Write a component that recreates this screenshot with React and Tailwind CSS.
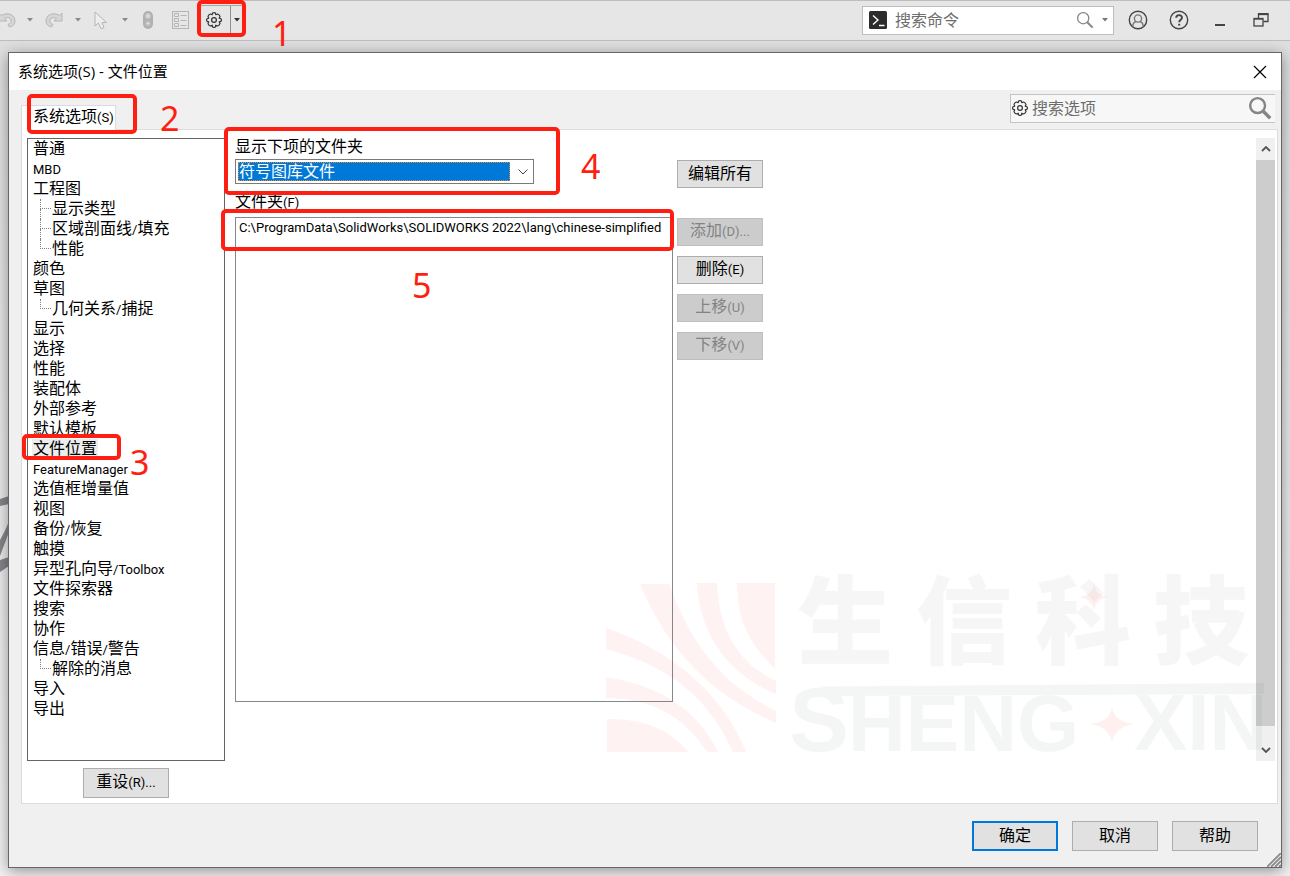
import { useState } from "react";

const treeItems = [
  { name: "普通" },
  { name: "MBD" },
  { name: "工程图" },
  { name: "显示类型", child: true },
  { name: "区域剖面线/填充", child: true },
  { name: "性能", child: true, last: true },
  { name: "颜色" },
  { name: "草图" },
  { name: "几何关系/捕捉", child: true, last: true },
  { name: "显示" },
  { name: "选择" },
  { name: "性能" },
  { name: "装配体" },
  { name: "外部参考" },
  { name: "默认模板" },
  { name: "文件位置", id: "locations" },
  { name: "FeatureManager" },
  { name: "选值框增量值" },
  { name: "视图" },
  { name: "备份/恢复" },
  { name: "触摸" },
  { name: "异型孔向导/Toolbox" },
  { name: "文件探索器" },
  { name: "搜索" },
  { name: "协作" },
  { name: "信息/错误/警告" },
  { name: "解除的消息", child: true, last: true },
  { name: "导入" },
  { name: "导出" },
];

// Latin runs are set smaller than the Chinese around them
function Mixed({ text }) {
  return text.split(/([\x20-\x7e]+)/).map((part, index) => (
    <span key={index} className={index % 2 ? "font-['Roboto',sans-serif] text-[13px]" : ""}>
      {part}
    </span>
  ));
}

function DialogButton({ text, disabled = false, primary = false, className = "h-7" }) {
  const tone = disabled ? "border border-[#bfbfbf] bg-[#cccccc] text-[#838383]" : primary ? "border-2 border-[#0078d7] bg-[#e1e1e1]" : "border border-[#adadad] bg-[#e1e1e1]";
  return (
    <button type="button" disabled={disabled} className={`flex w-[86px] shrink-0 items-center justify-center whitespace-nowrap pb-[2px] leading-5 ${tone} ${className}`}>
      <span className="whitespace-nowrap">
        <Mixed text={text} />
      </span>
    </button>
  );
}

function Gear({ className = "" }) {
  return (
    <svg viewBox="0 0 16 16" className={`size-4 shrink-0 ${className}`} fill="none" stroke="currentColor" strokeWidth="1.2" strokeLinejoin="round">
      <path d="M6.6 1 Q8 .2 9.4 1 L9.8 2.7 L11.5 2 Q13.4 2.5 14 4.4 L13.2 6.2 L15 6.8 Q15.8 8 15 9.3 L13.2 9.8 L14 11.6 Q13.4 13.5 11.5 14 L9.8 13.2 L9.4 15 Q8 15.8 6.6 15 L6.2 13.2 L4.4 14 Q2.5 13.5 2 11.6 L2.7 9.8 L1 9.3 Q.2 8 1 6.8 L2.7 6.2 L2 4.4 Q2.5 2.5 4.4 2 L6.2 2.7 Z" />
      <circle cx="8" cy="8" r="2.4" />
    </svg>
  );
}

function Caret({ className = "text-[#8a8a8a]" }) {
  return (
    <svg viewBox="0 0 6 4" className={`h-[4px] w-[6px] shrink-0 ${className}`} fill="currentColor">
      <path d="M0 0H6L3 3.6Z" />
    </svg>
  );
}

function Magnifier({ className = "", width = 2 }) {
  return (
    <svg viewBox="0 0 20 20" className={`shrink-0 ${className}`} fill="none" stroke="currentColor" strokeWidth={width}>
      <circle cx="8" cy="8" r="6.2" />
      <path d="M12.5 12.5L18.5 18.5" strokeWidth={width + 0.8} />
    </svg>
  );
}

function TopBar() {
  return (
    <header className="flex h-[41px] shrink-0 items-center justify-between border-y border-[#bdbdbd] bg-[#e6e6e6] pb-px">
      <div className="flex h-full items-center text-[#b5b5b5]">
        <button type="button" aria-label="撤销" className="flex w-[27px] items-center">
          <svg viewBox="0 0 16 16" className="h-4 w-4" fill="#d6d6d6" stroke="currentColor">
            <path d="M-1 1L1.500 3.500C8 -.5 15 3 15 9C15 12 13 14.300 9.500 15L8 12.500C10.500 11.500 11.500 10 11 8C10.300 5.500 7 5 4.500 6.500L7 9H-1Z" />
          </svg>
        </button>
        <Caret />
        <button type="button" aria-label="重做" className="ml-[12px] flex w-[30px] items-center">
          <svg viewBox="0 0 18 16" className="h-4 w-[18px]" fill="#d6d6d6" stroke="currentColor">
            <path d="M17 1L14.500 3.500C8 -.5 1 3 1 9C1 12 3 14.300 6.500 15L8 12.500C5.500 11.500 4.500 10 5 8C5.700 5.500 9 5 11.500 6.500L9 9H17Z" />
          </svg>
        </button>
        <Caret />
        <button type="button" aria-label="选择" className="ml-[13px] flex w-[28px] items-center">
          <svg viewBox="0 0 14 19" className="h-[19px] w-[14px]" fill="#eeeeee" stroke="currentColor">
            <path d="M1 1V15L4.500 12L7 17.800L10 16.600L8 11.500L12.500 11.500Z" />
          </svg>
        </button>
        <Caret />
        <button type="button" aria-label="重建模型" className="ml-[14px] flex w-[30px] items-center">
          <svg viewBox="0 0 12 18" className="h-[18px] w-3">
            <rect x="1" y="0" width="10" height="18" rx="5" fill="#b0b0b0" />
            <circle cx="6" cy="5" r="3" fill="#c6c6c6" />
            <circle cx="6" cy="12.500" r="3" fill="#bdbdbd" />
            <path d="M6 3V7M4 5H8M6 11V14M4.500 12.500H7.500" stroke="#e0e0e0" />
          </svg>
        </button>
        <button type="button" aria-label="文件属性" className="flex w-[26px] items-center">
          <svg viewBox="0 0 17 18" className="h-[18px] w-[17px]" fill="none" stroke="currentColor">
            <rect x=".5" y=".5" width="16" height="17" />
            <path d="M2.500 2.500H6.500V5.500H2.500ZM2.500 7.500H6.500V10.500H2.500ZM2.500 12.500H6.500V15.500H2.500ZM8.500 4.500H14.500M8.500 9.500H14.500M8.500 14.500H14.500" />
          </svg>
        </button>
        <div className="flex h-[30px] items-center border border-[#a8a8a8] text-[#333333]">
          <button type="button" aria-label="选项" className="flex h-full w-[32px] items-center justify-center border-r border-[#8f8f8f] pr-px">
            <Gear />
          </button>
          <button type="button" aria-label="选项菜单" className="flex h-full w-3 items-center justify-center">
            <Caret className="text-[#333333]" />
          </button>
        </div>
      </div>
      <div className="flex items-center pr-[9px] text-[#444444]">
        <label className="mr-[3px] flex h-[29px] w-[252px] items-center border border-[#bdbdbd] bg-white pl-[6px] pr-[5px]">
          <svg viewBox="0 0 18 18" className="size-[18px] shrink-0" fill="none">
            <rect width="18" height="18" rx="1.500" fill="#2c2c2c" />
            <path d="M4 4.500L9 9L4 13.500M10 14.500H15.500" stroke="white" strokeWidth="1.400" />
          </svg>
          <input type="text" aria-label="搜索命令" placeholder="搜索命令" className="ml-2 w-0 flex-1 bg-transparent leading-5 outline-none placeholder:text-[#6d6d6d]" />
          <Magnifier className="size-[18px] text-[#858585]" width={1.4} />
          <Caret className="ml-[8px] text-[#777777]" />
        </label>
        <button type="button" aria-label="登录" className="flex w-[41px] justify-center">
          <svg viewBox="0 0 20 20" className="size-5" fill="none" stroke="currentColor" strokeWidth="1.400">
            <circle cx="10" cy="10" r="8.700" />
            <circle cx="10" cy="8.500" r="3.600" stroke="#777777" />
            <path d="M4.800 16.200C5 13.300 6.500 12 8 11.800M15.200 16.200C15 13.300 13.500 12 12 11.800" stroke="#777777" />
          </svg>
        </button>
        <button type="button" aria-label="帮助" className="flex w-[41px] justify-center">
          <svg viewBox="0 0 20 20" className="size-5" fill="none" stroke="currentColor" strokeWidth="1.400">
            <circle cx="10" cy="10" r="8.700" />
            <path d="M7.200 7.800C7.200 4.200 13 4.300 13 7.600C13 9.700 10.200 9.800 10.200 12.300" strokeWidth="1.900" />
            <path d="M9.200 13.800H11.200V15.600H9.200Z" fill="currentColor" stroke="none" />
          </svg>
        </button>
        <button type="button" aria-label="最小化" className="flex w-[41px] justify-center">
          <svg viewBox="0 0 16 16" className="size-4" stroke="currentColor" strokeWidth="2">
            <path d="M3 13H13" />
          </svg>
        </button>
        <button type="button" aria-label="还原" className="flex w-[41px] justify-center">
          <svg viewBox="0 0 16 16" className="size-4" fill="none" stroke="currentColor" strokeWidth="1.300">
            <path d="M5.500 6V1.700H15V9.500H10.500" />
            <path d="M5 2.500H15.500" />
            <rect x="1" y="6.500" width="9" height="7.500" />
            <path d="M1 7H10" />
          </svg>
        </button>
      </div>
    </header>
  );
}

function OptionTree({ selected, onSelect }) {
  return (
    <ul className="w-[198px] shrink-0 border border-[#646464] bg-white pl-1">
      {treeItems.map((item, index) => (
        <li key={index} className="flex h-5 items-center">
          {item.child && (
            <span className="ml-2 flex h-5 w-[11px] flex-col">
              <span className="h-[10px] border-b border-l border-dotted border-[#808080]" />
              <span className={item.last ? "h-[10px]" : "h-[10px] border-l border-dotted border-[#808080]"} />
            </span>
          )}
          <button type="button" onClick={() => onSelect(index)} className={`h-5 whitespace-nowrap px-px pb-[2px] leading-[18px] ${selected === index ? "bg-[#ededed]" : ""}`}>
            <Mixed text={item.name} />
          </button>
        </li>
      ))}
    </ul>
  );
}

function ScrollBar() {
  return (
    <div className="flex w-[19px] shrink-0 flex-col items-center bg-[#f0f0f0] text-[#555555]">
      <svg viewBox="0 0 10 6" className="my-[8px] h-[6px] w-[10px] shrink-0" fill="none" stroke="currentColor" strokeWidth="1.800">
        <path d="M1 5L5 1L9 5" />
      </svg>
      <div className="w-full flex-1 bg-[#cdcdcd]" />
      <svg viewBox="0 0 10 6" className="mb-[8px] mt-[21px] h-[6px] w-[10px] shrink-0" fill="none" stroke="currentColor" strokeWidth="1.800">
        <path d="M1 1L5 5L9 1" />
      </svg>
    </div>
  );
}

function Watermark() {
  return (
    <svg viewBox="0 0 660 200" className="pointer-events-none absolute bottom-[102px] right-[15px] h-[200px] w-[660px] overflow-visible">
      <g fill="#f04030" opacity=".06" transform="translate(0 14)">
        <path d="M34 5H63C84 62 112 103 170 132V144C96 112 58 62 34 5Z" />
        <path d="M91 4H111C113 52 132 84 170 102V115C120 95 93 52 91 4Z" />
        <path d="M131 4H169V90C143 65 131 40 131 4Z" />
        <path d="M0 49C67 72 117 115 140 173H127C103 118 61 86 0 70Z" />
        <path d="M0 98C51 106 90 128 112 173H101C76 135 45 120 0 119Z" />
        <path d="M1 140C38 140 64 150 82 173H1Z" />
      </g>
      <g fill="black" opacity=".03" className="font-['Noto_Sans_CJK_SC',sans-serif] text-[96px] font-black">
        <text x="191" y="91">生</text>
        <text x="310" y="91">信</text>
        <text x="429" y="91">科</text>
        <text x="547" y="91">技</text>
      </g>
      <g fill="#104030" opacity=".04" className="font-['Liberation_Sans',sans-serif] font-bold">
        <path d="M214 121.500L658 118V129L226 131Z" />
        <text x="183" y="186" className="text-[90px]">S</text>
        <text x="242" y="186" className="text-[80px]">HENG</text>
        <text x="528" y="185" className="text-[80px]">XIN</text>
      </g>
      <g fill="#f04030" opacity=".07" transform="translate(0 14)">
        <path d="M488 5Q490 17 501 18Q490 20 488 31Q486 20 473 18Q486 17 488 5Z" />
        <path d="M506 129Q509 143 528 145Q509 148 506 163Q503 148 485 145Q503 143 506 129Z" />
      </g>
    </svg>
  );
}

// red numbered marks that lie over the window
function Marks() {
  return (
    <div className="pointer-events-none absolute left-0 top-0 font-['Noto_Sans',sans-serif] text-[34px] leading-10 text-[#ff1f12]">
      <span className="absolute left-[197px] top-0 h-[37px] w-[49px] rounded-[5px] border-4 border-[#ff1f12]" />
      <span className="absolute left-[27px] top-[94px] h-[40px] w-[110px] rounded-[5px] border-4 border-[#ff1f12]" />
      <span className="absolute left-[22px] top-[434px] h-[26px] w-[99px] rounded-[5px] border-4 border-[#ff1f12]" />
      <span className="absolute left-[224px] top-[127px] h-[68px] w-[336px] rounded-[5px] border-4 border-[#ff1f12]" />
      <span className="absolute left-[221px] top-[209px] h-[42px] w-[453px] rounded-[5px] border-4 border-[#ff1f12]" />
      <span className="absolute left-[272px] top-[13px]">1</span>
      <span className="absolute left-[160px] top-[98px]">2</span>
      <span className="absolute left-[130px] top-[442px]">3</span>
      <span className="absolute left-[581px] top-[146px]">4</span>
      <span className="absolute left-[412px] top-[265px]">5</span>
    </div>
  );
}

export default function App() {
  const [selected, setSelected] = useState(treeItems.findIndex((item) => item.id === "locations"));

  return (
    <div className="relative flex min-h-screen flex-col overflow-hidden bg-linear-to-b from-[#dedede] to-[#f2f2f2] font-['Open_Sans','Noto_Sans_CJK_SC',sans-serif] text-base text-black">
      <TopBar />
      <svg viewBox="0 0 9 84" className="absolute left-0 top-[494px] h-[84px] w-[9px]" fill="#85858a">
        <path d="M0 5L9 2V10L0 12ZM9 26C7 34 3 40 0 46V62L9 38ZM0 66L9 63V72L0 78Z" />
      </svg>

      <main className="relative mx-2 mb-2 mt-[11px] flex flex-1 flex-col border border-[#666666] bg-[#f0f0f0] shadow-[0_3px_14px_rgba(0,0,0,.4)]">
        <div className="flex h-[37px] shrink-0 items-center justify-between bg-white pl-[9px] pr-[14px]">
          <h1 className="pb-[2px] text-[15px] leading-5">系统选项(S) - 文件位置</h1>
          <button type="button" aria-label="关闭">
            <svg viewBox="0 0 14 14" className="size-[14px]" stroke="black" strokeWidth="1.200">
              <path d="M1 1L13 13M13 1L1 13" />
            </svg>
          </button>
        </div>

        <div className="ml-3 mr-[3px] flex h-[39px] shrink-0 justify-between">
          <button type="button" className="relative -mb-px mt-[15px] w-[95px] self-stretch border border-b-0 border-[#dcdcdc] bg-white pb-[3px] pl-[11px] text-left leading-5">
            <Mixed text="系统选项(S)" />
          </button>
          <label className="mr-[3px] mt-1 flex h-[29px] w-[265px] items-center border border-r-0 border-[#c4c4c4] bg-[#f7f7f7] pb-px pl-px pr-[3px]">
            <Gear className="text-[#333333]" />
            <input type="text" aria-label="搜索选项" placeholder="搜索选项" className="ml-1 w-0 flex-1 bg-transparent leading-5 outline-none placeholder:text-[#6d6d6d]" />
            <Magnifier className="size-6 text-[#858585]" width={2} />
          </label>
        </div>

        <section className="ml-3 mr-[3px] flex flex-1 flex-col border border-[#dcdcdc] bg-white pb-[5px] pl-[5px] pr-[2px] pt-2">
          <div className="flex flex-1">
            <OptionTree selected={selected} onSelect={setSelected} />
            <div className="ml-[10px] flex w-[438px] flex-col">
              <label htmlFor="folder-kind" className="h-[21px] leading-4">
                显示下项的文件夹
              </label>
              <div className="flex h-[25px] w-[299px] items-center border border-[#7a7a7a] p-[2px]">
                <select id="folder-kind" className="h-[19px] flex-1 appearance-none border border-dotted border-[#e58a2c] bg-[#0078d7] leading-[17px] text-white outline-none">
                  <option>符号图库文件</option>
                </select>
                <svg viewBox="0 0 10 6" className="ml-2 mr-[3px] h-[6px] w-[10px]" fill="none" stroke="#444444">
                  <path d="M.5 .5L5 5L9.500 .5" />
                </svg>
              </div>
              <div id="folder-label" className="mt-2 h-[25px] leading-[18px]">
                <Mixed text="文件夹(F)" />
              </div>
              <ul aria-labelledby="folder-label" className="mb-[59px] flex-1 border border-[#828790] bg-white px-[3px]">
                <li className="whitespace-nowrap font-['Roboto',sans-serif] text-[13px] leading-5">C:\ProgramData\SolidWorks\SOLIDWORKS 2022\lang\chinese-simplified</li>
              </ul>
            </div>
            <div className="ml-1 mt-[22px] flex flex-1 flex-col gap-[10px]">
              <DialogButton text="编辑所有" className="mb-5 h-7" />
              <DialogButton text="添加(D)..." disabled />
              <DialogButton text="删除(E)" />
              <DialogButton text="上移(U)" disabled />
              <DialogButton text="下移(V)" disabled />
            </div>
            <ScrollBar />
          </div>
          <div className="ml-[56px] mt-[7px]">
            <DialogButton text="重设(R)..." className="h-[30px]" />
          </div>
        </section>

        <footer className="flex h-[63px] shrink-0 justify-end gap-[14px] pr-[23px] pt-[17px]">
          <DialogButton text="确定" primary className="h-[30px]" />
          <DialogButton text="取消" className="h-[30px]" />
          <DialogButton text="帮助" className="h-[30px]" />
        </footer>
        <svg viewBox="0 0 14 14" className="absolute bottom-0 right-0 size-[14px]" stroke="#8a8a8a" strokeWidth="1.800">
          <path d="M0 14L14 0M4 14L14 4M8 14L14 8M12 14L14 12" />
        </svg>
        <Watermark />
      </main>
      <Marks />
    </div>
  );
}
